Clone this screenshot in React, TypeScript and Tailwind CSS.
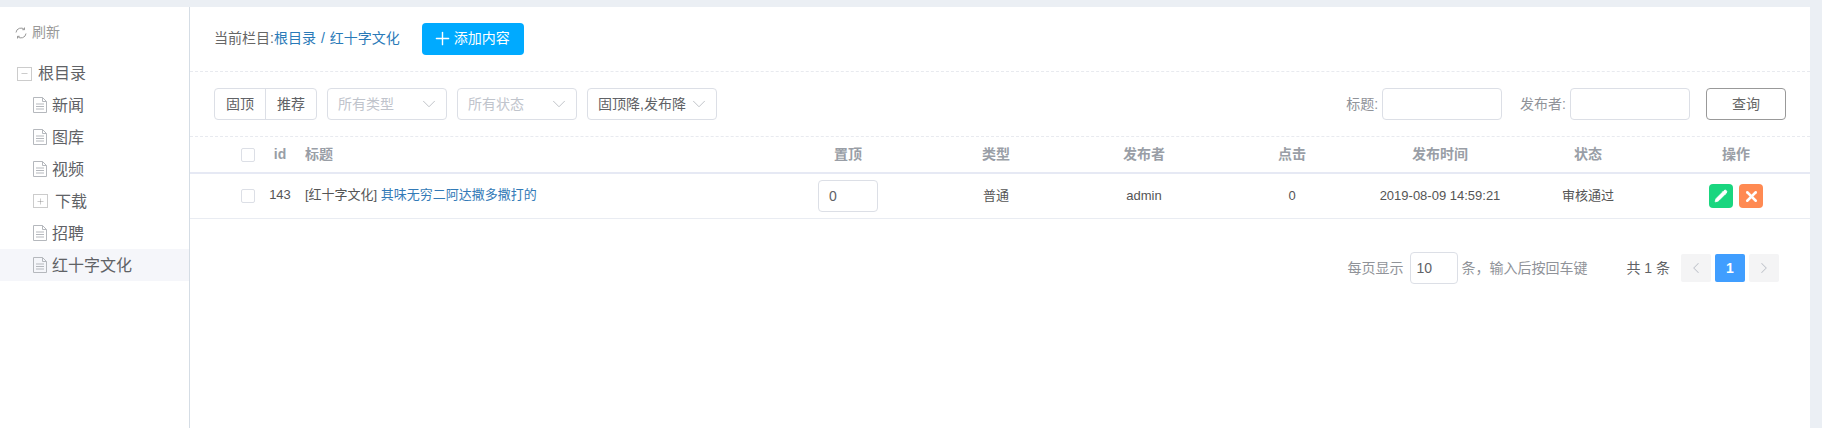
import { ChevronDown, ChevronLeft, ChevronRight, Minus, Pencil, Plus, X } from "lucide-react";

const TREE = [
  { label: "新闻", icon: "file" },
  { label: "图库", icon: "file" },
  { label: "视频", icon: "file" },
  { label: "下载", icon: "plus" },
  { label: "招聘", icon: "file" },
  { label: "红十字文化", icon: "file", active: true },
];

const FileIcon = () => (
  <svg width="14" height="16" viewBox="0 0 14 16" fill="none" stroke="#b5b8bd" strokeWidth="1" className="shrink-0">
    <path d="M0.5 0.5h9l4 4v11h-13z" />
    <path d="M9.5 0.5v4h4M3 7h8M3 9.5h8M3 12h8" />
  </svg>
);

const RefreshIcon = () => (
  <svg width="12" height="12" viewBox="0 0 12 12" fill="none" stroke="#999" strokeWidth="1" className="shrink-0">
    <path d="M1 5.5a5 5 0 0 1 8.5-3M11 6.5a5 5 0 0 1-8.5 3" />
    <path d="M9.5 0.5v2.2h-2.2M2.5 11.5V9.3h2.2" />
  </svg>
);

const Sidebar = () => (
  <aside className="w-[190px] shrink-0 border-r border-[#d5dde5] bg-white">
    <div className="flex h-[49px] items-center gap-[5px] pl-[15px] pt-[2px] text-[14px] text-[#999]">
      <RefreshIcon />
      刷新
    </div>
    <div className="flex h-[33px] items-center pl-[17px] pt-[2px] text-[16px] text-[#606266]">
      <span className="flex h-[14px] w-[15px] items-center justify-center border border-[#ccc]">
        <Minus size={9} strokeWidth={1} color="#777" />
      </span>
      <span className="ml-[6px]">根目录</span>
    </div>
    {TREE.map((item) => (
      <div
        key={item.label}
        className={`flex h-[32px] items-center pl-[33px] text-[16px] text-[#606266] ${item.active ? "bg-[#f5f6fa]" : ""}`}
      >
        {item.icon === "file" ? (
          <FileIcon />
        ) : (
          <span className="flex h-[14px] w-[15px] items-center justify-center border border-[#ccc]">
            <Plus size={9} strokeWidth={1} color="#777" />
          </span>
        )}
        <span className={`pt-[2px] ${item.icon === "file" ? "ml-[5px]" : "ml-[7px]"}`}>{item.label}</span>
      </div>
    ))}
  </aside>
);

const Select = ({ text, width, placeholder }: { text: string; width: string; placeholder?: boolean }) => (
  <div
    className={`flex h-[32px] items-center justify-between rounded-[4px] border border-[#dcdfe6] pl-[10px] pr-[6px] text-[14px] ${width} ${placeholder ? "text-[#c0c4cc]" : "text-[#606266]"}`}
  >
    {text}
    <ChevronDown size={22} strokeWidth={0.9} color="#b4b7bd" />
  </div>
);

const COLS = "grid grid-cols-[32px_32px_1fr_repeat(7,148px)] items-center pl-[42px]";

const Checkbox = () => (
  <input type="checkbox" className="mx-auto block h-[14px] w-[14px] appearance-none rounded-[2px] border border-[#dcdfe6] bg-white" />
);

export default function App() {
  return (
    <div className="flex h-[428px] flex-col overflow-hidden bg-[#ebeff4] pt-[7px] font-['Liberation_Sans','Noto_Sans_CJK_SC',sans-serif] pr-[12px]">
      <div className="flex min-h-0 flex-1 bg-white">
        <Sidebar />

        <main className="min-w-0 flex-1">
          {/* Current column */}
          <div className="flex h-[65px] items-center border-b border-dashed border-[#e8eaef] pb-[1px] pl-[24px] text-[14px]">
            <span className="text-[#666]">当前栏目:</span>
            <span className="text-[#2a7ab8]">根目录</span>
            <span className="mx-[5px] text-[#2a7ab8]">/</span>
            <span className="text-[#2a7ab8]">红十字文化</span>
            <button className="ml-[22px] flex h-[32px] w-[102px] items-center gap-[1px] rounded-[4px] bg-[#00aaff] pl-[10px] text-white">
              <Plus size={21} strokeWidth={1.6} />
              添加内容
            </button>
          </div>

          {/* Filters */}
          <div className="flex h-[65px] items-center border-b border-dashed border-[#e8eaef] pl-[24px] pr-[24px] text-[14px]">
            <div className="flex h-[32px] overflow-hidden rounded-[4px] border border-[#dcdfe6] text-[#606266]">
              <span className="flex w-[51px] items-center justify-center border-r border-[#dcdfe6]">固顶</span>
              <span className="flex w-[50px] items-center justify-center">推荐</span>
            </div>
            <div className="ml-[10px] flex gap-[10px]">
              <Select text="所有类型" width="w-[120px]" placeholder />
              <Select text="所有状态" width="w-[120px]" placeholder />
              <Select text="固顶降,发布降" width="w-[130px]" />
            </div>
            <div className="ml-auto flex items-center text-[#909399]">
              <span>标题:</span>
              <input className="ml-[4px] h-[32px] w-[120px] rounded-[4px] border border-[#dcdfe6] bg-white" />
              <span className="ml-[18px]">发布者:</span>
              <input className="ml-[4px] h-[32px] w-[120px] rounded-[4px] border border-[#dcdfe6] bg-white" />
              <button className="ml-[16px] h-[32px] w-[80px] rounded-[4px] border border-[#999] text-[#666]">查询</button>
            </div>
          </div>

          {/* Table */}
          <div className={`${COLS} h-[37px] border-b-2 border-[#e6e9f4] text-[14px] font-bold text-[#999ea6]`}>
            <Checkbox />
            <div className="text-center text-[14px]">id</div>
            <div className="pl-[9px]">标题</div>
            {["置顶", "类型", "发布者", "点击", "发布时间", "状态", "操作"].map((h) => (
              <div key={h} className="text-center">{h}</div>
            ))}
          </div>
          <div className={`${COLS} h-[45px] border-b border-[#e9ecf2] text-[13px] text-[#555]`}>
            <Checkbox />
            <div className="pb-[2px] text-center">143</div>
            <div className="pb-[2px] pl-[9px]">
              [红十字文化] <span className="text-[#337ab7]">其味无穷二阿达撒多撒打的</span>
            </div>
            <div className="flex justify-center">
              <input
                defaultValue="0"
                className="h-[32px] w-[60px] rounded-[4px] border border-[#dcdfe6] bg-white pl-[10px] text-[14px] text-[#606266]"
              />
            </div>
            <div className="text-center">普通</div>
            <div className="pb-[1px] text-center">admin</div>
            <div className="pb-[1px] text-center">0</div>
            <div className="pb-[1px] text-center">2019-08-09 14:59:21</div>
            <div className="pb-[1px] text-center">审核通过</div>
            <div className="flex justify-center gap-[6px]">
              <button className="flex h-[24px] w-[24px] items-center justify-center rounded-[4px] bg-[#19d67f] text-white">
                <Pencil size={14} fill="white" strokeWidth={1.5} />
              </button>
              <button className="flex h-[24px] w-[24px] items-center justify-center rounded-[4px] bg-[#ff8a52] text-white">
                <X size={17} strokeWidth={3.6} />
              </button>
            </div>
          </div>

          {/* Pagination */}
          <div className="mt-[33px] flex items-center justify-end pr-[31px] text-[14px] text-[#909399]">
            <span>每页显示</span>
            <input
              defaultValue="10"
              className="ml-[7px] mr-[3px] h-[32px] w-[48px] rounded-[4px] border border-[#dcdfe6] bg-white pl-[5px] text-[14px] text-[#606266]"
            />
            <span>条，输入后按回车键</span>
            <span className="ml-[39px] text-[#606266]">共 1 条</span>
            <div className="ml-[11px] flex gap-[4px]">
              <span className="flex h-[28px] w-[30px] items-center justify-center rounded-[2px] bg-[#f4f4f5]">
                <ChevronLeft size={18} strokeWidth={1.4} color="#c0c4cc" />
              </span>
              <span className="flex h-[28px] w-[30px] items-center justify-center rounded-[2px] bg-[#409eff] font-bold text-white">1</span>
              <span className="flex h-[28px] w-[30px] items-center justify-center rounded-[2px] bg-[#f4f4f5]">
                <ChevronRight size={18} strokeWidth={1.4} color="#c0c4cc" />
              </span>
            </div>
          </div>
        </main>
      </div>
    </div>
  );
}
